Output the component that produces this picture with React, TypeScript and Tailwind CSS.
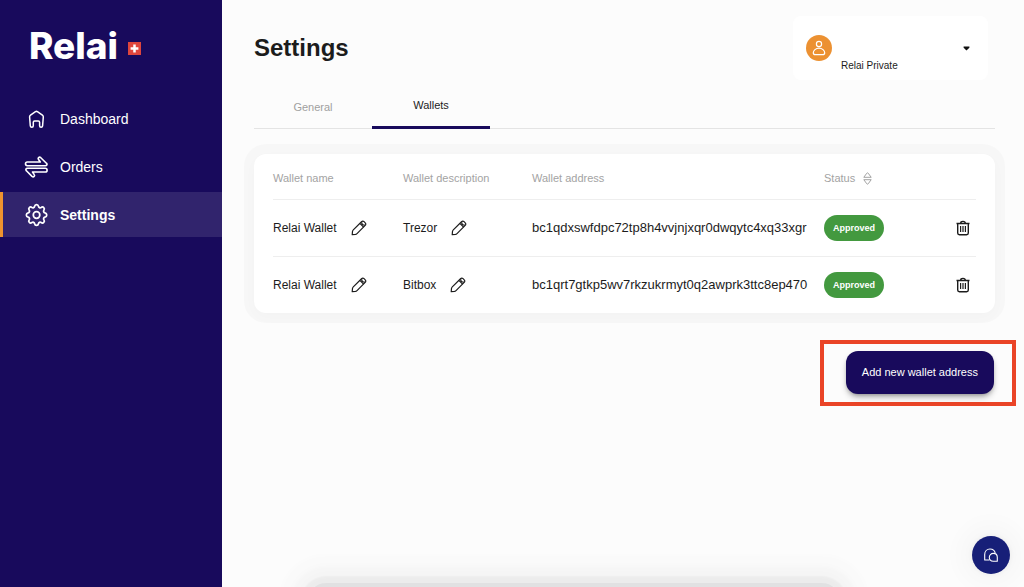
import type { ReactNode } from "react";

interface Wallet {
  name: string;
  description: string;
  address: string;
}

const WALLETS: Wallet[] = [
  { name: "Relai Wallet", description: "Trezor", address: "bc1qdxswfdpc72tp8h4vvjnjxqr0dwqytc4xq33xgr" },
  { name: "Relai Wallet", description: "Bitbox", address: "bc1qrt7gtkp5wv7rkzukrmyt0q2awprk3ttc8ep470" },
];

export default function App() {
  return (
    <div className="flex min-h-screen overflow-hidden bg-[#fcfcfc] font-['Liberation_Sans',Arial,sans-serif] text-[#1c1c1c]">
      <Sidebar />
      <main className="flex min-w-0 flex-1 flex-col pr-2 pl-8">
        <header className="flex items-start justify-between pt-4 pr-7">
          <h1 className="pt-4 text-2xl leading-8 font-bold">Settings</h1>
          <AccountMenu />
        </header>

        <nav className="mt-1 mr-[21px] flex h-[45px] border-b border-[#e4e4e4] text-[11px]">
          <a href="#general" className="flex w-[118px] items-center justify-center pt-0.5 text-[#a0a0a0]">
            General
          </a>
          <a
            href="#wallets"
            className="-mb-px flex w-[118px] items-center justify-center border-b-3 border-[#180a5c]"
          >
            Wallets
          </a>
        </nav>

        <WalletTable />

        <div className="mt-[27px] self-end border-4 border-[#ea4427] pt-[7px] pr-[18px] pb-2 pl-[22px]">
          <button className="h-[43px] rounded-xl bg-[#180a5c] px-4 text-[11px] text-white shadow-md shadow-black/30">
            Add new wallet address
          </button>
        </div>

        {/* Shadow of the dock peeking in from below */}
        <div className="pointer-events-none fixed right-[184px] -bottom-8 left-[308px] h-9 rounded-[28px] bg-[#e1e1e2] shadow-[0_0_2px_7px_rgba(0,0,0,0.04),0_0_4px_17px_rgba(0,0,0,0.02),0_0_6px_28px_rgba(0,0,0,0.01)]" />

        <button
          aria-label="Open chat"
          className="fixed right-[14px] bottom-[13px] flex h-[38px] w-[38px] items-center justify-center rounded-full bg-[#171f78] shadow-[0_0_4px_2px_rgba(0,0,0,0.04),0_0_4px_12px_rgba(0,0,0,0.012),0_0_4px_22px_rgba(0,0,0,0.008)]"
        >
          <ChatIcon />
        </button>
      </main>
    </div>
  );
}

function Sidebar() {
  return (
    <aside className="w-[222px] shrink-0 bg-[#180a5c] text-white">
      <div className="flex h-[96px] items-center gap-[10px] pb-1 pl-[29px]">
        <span className="font-[Inter] text-[37px] leading-10 font-extrabold">Relai</span>
        <svg width="13" height="13" viewBox="0 0 13 13" className="mt-1">
          <rect width="13" height="13" fill="#de463d" />
          <path d="M6.5 2.6v7.8M2.6 6.5h7.8" stroke="#fff" strokeWidth="2.5" />
        </svg>
      </div>
      <nav className="flex flex-col gap-[3px]">
        <NavItem label="Dashboard" icon={<HomeIcon />} />
        <NavItem label="Orders" icon={<OrdersIcon />} />
        <NavItem label="Settings" icon={<GearIcon />} active />
      </nav>
    </aside>
  );
}

function NavItem({ label, icon, active }: { label: string; icon: ReactNode; active?: boolean }) {
  return (
    <a
      href={`#${label.toLowerCase()}`}
      className={`flex h-[45px] items-center gap-3 border-l-3 pl-[21px] text-sm ${
        active ? "border-[#ef942f] bg-[#31246d] font-bold" : "border-transparent"
      }`}
    >
      {icon}
      {label}
    </a>
  );
}

function AccountMenu() {
  return (
    <button className="flex h-16 w-[195px] items-center rounded-lg bg-white pr-[18px] pl-[13px]">
      <svg width="26" height="26" viewBox="0 0 26 26" fill="none">
        <circle cx="13" cy="13" r="13" fill="#ec9132" />
        <g stroke="#fff" strokeWidth="1.2">
          <circle cx="13" cy="9" r="2.6" />
          <path d="M13 13.2c3.2 0 5.7 2.4 5.7 4.5 0 1.3-.9 2-2.1 2H9.4c-1.2 0-2.1-.7-2.1-2 0-2.1 2.5-4.5 5.7-4.5z" />
        </g>
      </svg>
      <span className="mt-[34px] ml-[9px] text-[10px]">Relai Private</span>
      <svg width="7" height="5" viewBox="0 0 7 5" className="ml-auto">
        <path d="M.6.5h5.8v1.3L3.5 4.6.6 1.8z" fill="#111" />
      </svg>
    </button>
  );
}

function WalletTable() {
  return (
    <section className="mt-[25px] mr-[21px] rounded-xl bg-white px-[19px] shadow-[0_0_0_10px_rgba(0,0,0,0.018),0_4px_14px_0_rgba(0,0,0,0.018)]">
      <table className="w-full table-fixed text-left">
        <colgroup>
          <col className="w-[130px]" />
          <col className="w-[129px]" />
          <col />
          <col className="w-[120px]" />
          <col className="w-8" />
        </colgroup>
        <thead className="text-[11px] text-[#a3a3a3]">
          <tr className="h-[45px] border-b border-[#eeeeee] *:pt-1 *:font-normal">
            <th>Wallet name</th>
            <th>Wallet description</th>
            <th>Wallet address</th>
            <th>
              <span className="flex items-center gap-2">
                Status
                <SortIcon />
              </span>
            </th>
            <th aria-label="Actions" />
          </tr>
        </thead>
        <tbody className="text-xs">
          {WALLETS.map((wallet) => (
            <tr key={wallet.address} className="h-[57px] border-b border-[#eeeeee] last:border-b-0">
              <td>
                <Editable value={wallet.name} />
              </td>
              <td>
                <Editable value={wallet.description} />
              </td>
              <td className="text-[13px]">{wallet.address}</td>
              <td>
                <span className="inline-flex h-[26px] w-[60px] items-center justify-center rounded-full bg-[#43993f] text-[9px] font-bold text-white">
                  Approved
                </span>
              </td>
              <td>
                <button aria-label="Delete wallet" className="flex px-3">
                  <TrashIcon />
                </button>
              </td>
            </tr>
          ))}
        </tbody>
      </table>
    </section>
  );
}

function Editable({ value }: { value: string }) {
  return (
    <span className="flex items-center gap-[14px]">
      {value}
      <button aria-label={`Edit ${value}`}>
        <PencilIcon />
      </button>
    </span>
  );
}

function HomeIcon() {
  return (
    <svg width="24" height="24" viewBox="0 0 24 24" fill="none" stroke="currentColor" strokeWidth="1.5" strokeLinejoin="round">
      <path d="M11.5 4.700c.6-.4 1.300-.4 1.900 0l5 3.500c.7.500 1 1 .9 1.800l-.7 8.800c-.1.900-.7 1.500-1.500 1.500-.9 0-1.500-.6-1.500-1.500v-3.600c0-.8-.5-1.300-1.300-1.300h-3.700c-.8 0-1.300.5-1.300 1.300v3.600c0 .9-.6 1.500-1.500 1.500-.8 0-1.400-.6-1.500-1.500L5.600 10c-.1-.8.200-1.300.9-1.800z" />
    </svg>
  );
}

function OrdersIcon() {
  return (
    <svg width="24" height="24" viewBox="0 0 24 24" fill="none" stroke="currentColor" strokeWidth="1.6" strokeLinecap="round" strokeLinejoin="round">
      <path d="M3.300 10.700h18c1.600 0 2.200-1.500 1.100-2.500l-5.600-5.500c-1.600-1.400-3.400.4-2.100 2L16.300 7h-13c-2.400 0-2.400 3.700 0 3.700z" />
      <path d="M21.300 13.300H3.500c-1.600 0-2.200 1.500-1.100 2.500L8 21.400c1.600 1.400 3.400-.4 2.100-2L8.500 17h12.800c2.400 0 2.400-3.700 0-3.700z" />
    </svg>
  );
}

function GearIcon() {
  return (
    <svg width="24" height="24" viewBox="1 1 22 22" fill="none" stroke="currentColor" strokeWidth="1.6" strokeLinejoin="round">
      <circle cx="12.5" cy="12" r="3" />
      <path d="M10.700 4.100c.4-2.200 3.200-2.200 3.600 0 .2 1.100 1.400 1.600 2.400 1 1.800-1.300 3.800.7 2.500 2.500-.6 1-.1 2.200 1 2.400 2.200.4 2.200 3.600 0 4-1.100.2-1.600 1.400-1 2.400 1.300 1.800-.7 3.800-2.500 2.500-1-.6-2.200-.1-2.400 1-.4 2.200-3.200 2.200-3.600 0-.2-1.100-1.400-1.600-2.400-1-1.800 1.300-3.800-.7-2.500-2.500.6-1 .1-2.200-1-2.400-2.200-.4-2.200-3.600 0-4 1.100-.2 1.600-1.400 1-2.400-1.300-1.800.7-3.800 2.500-2.500 1 .6 2.200.1 2.400-1z" />
    </svg>
  );
}

function PencilIcon() {
  return (
    <svg width="16" height="16" viewBox="0 0 16 16" fill="none" stroke="currentColor" strokeWidth="1.2" strokeLinejoin="round">
      <path d="M1.200 14.700l.3-3.300c.1-.7.3-1.100.8-1.600l8.200-8.100c.8-.8 1.800-.8 2.600 0l1.100 1.100c.8.8.8 1.800 0 2.600L6 13.600c-.5.5-.9.700-1.600.8z" />
      <path d="M9.100 3.600l3.500 3.500M10.700 2.200c-.2 1.700 1.400 3.200 3.200 3" />
    </svg>
  );
}

function TrashIcon() {
  return (
    <svg width="14" height="16" viewBox="0 0 14 16" fill="none" stroke="currentColor" strokeWidth="1.4" strokeLinejoin="round">
      <path d="M.5 3.500h13M4.700 3.300c0-1.500.5-1.900 2.300-1.900s2.300.4 2.300 1.900M1.700 3.500V13c0 1.100.6 1.700 1.700 1.700h7.200c1.100 0 1.700-.6 1.700-1.700V3.500" />
      <path d="M4.600 6v6M7 6v6M9.400 6v6" strokeWidth="1.2" />
    </svg>
  );
}

function SortIcon() {
  return (
    <svg width="9" height="13" viewBox="0 0 9 13" fill="none" stroke="currentColor" strokeLinejoin="round">
      <path d="M.8 5.300L3.800 1.200c.4-.5 1-.5 1.400 0l3 4.100z" />
      <path d="M.8 7.700l3 4.100c.4.500 1 .5 1.400 0l3-4.100z" />
    </svg>
  );
}

function ChatIcon() {
  return (
    <svg width="16" height="16" viewBox="0 0 16 16" fill="none" stroke="#fff" strokeWidth="1.1" strokeLinejoin="round">
      <path d="M6.500 13H1.700V7.500C1.700 4.300 3.900 2 7 2c2.700 0 4.700 1.600 5.200 4.200" />
      <path d="M14.300 14.200h-4c-2.300 0-4-1.700-4-3.900s1.700-3.900 4-3.900 4 1.700 4 3.900z" />
    </svg>
  );
}
